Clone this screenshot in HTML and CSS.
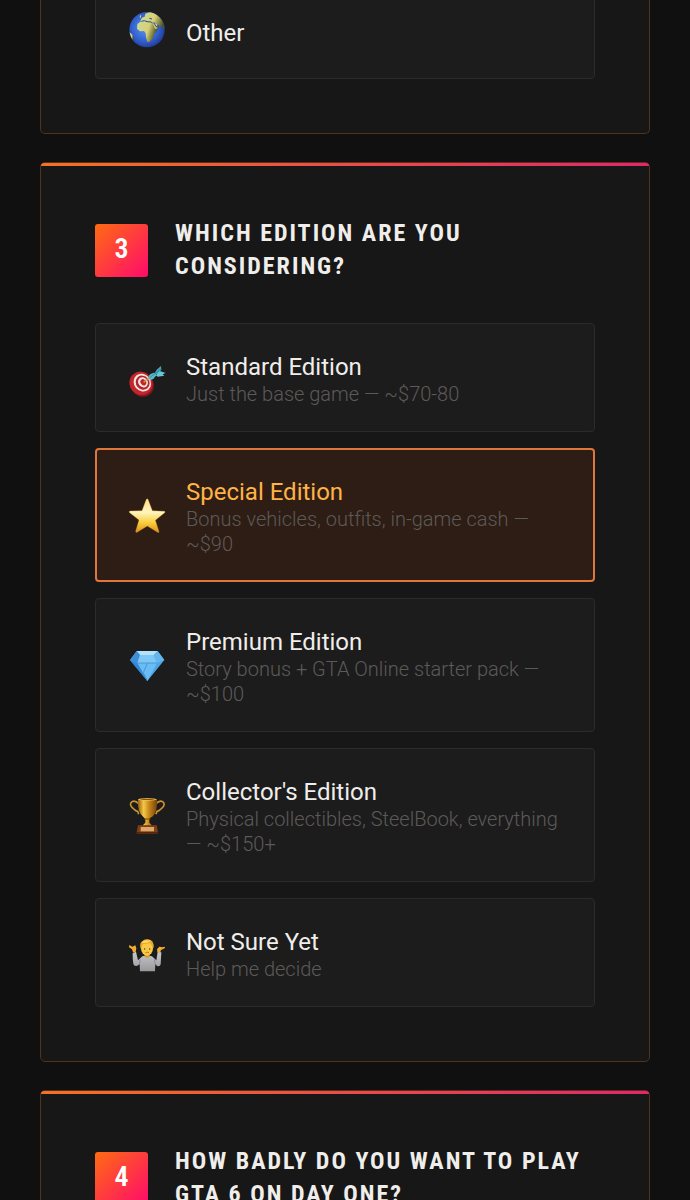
FILE: index.html
```
<!DOCTYPE html>
<html lang="en">
<head>
  <meta charset="UTF-8">
  <meta name="viewport" content="width=device-width, initial-scale=1.0">
  <title>GTA 6 Quiz</title>
  <link rel="stylesheet" href="styles.css">
</head>
<body>
  <main class="quiz">
    <section class="card card-continued">
      <div class="options">
        <label class="option option-plain">
          <input type="radio" name="platform" value="other">
          <svg class="icon" viewBox="27 33 108 108" aria-hidden="true">
            <defs>
              <radialGradient id="sea" cx="45%" cy="45%" r="55%">
                <stop offset="0" stop-color="#5f97ea"/>
                <stop offset=".7" stop-color="#315fd0"/>
                <stop offset="1" stop-color="#24409c"/>
              </radialGradient>
              <linearGradient id="land" x1="0" y1="0" x2="1" y2=".3">
                <stop offset="0" stop-color="#c9dc96"/>
                <stop offset=".6" stop-color="#d8cf77"/>
                <stop offset="1" stop-color="#4d5426"/>
              </linearGradient>
              <clipPath id="globe"><circle cx="81" cy="83" r="53"/></clipPath>
            </defs>
            <circle cx="81" cy="83" r="53" fill="url(#sea)"/>
            <g clip-path="url(#globe)" fill="url(#land)">
              <path d="M62 55l4-8 8-3 2-9 12-4 18-2 16 10 12 16 5 22-8 4-6-8-7 1-5-7-8-4-4 5 4 5-6 2-5-7-6 0-5-4-6 1-6 3-8 1z"/>
              <path d="M52 66l9-7 13 0 7 4 17 0 6 15 9 3-4 9-7 7-1 8-6 9-7 6-6-1-4-13-1-12-5-7-12 1-9-8z"/>
              <path d="M100 64l10 1 7 9-7 8-6-3z"/>
              <path d="M28 90l9 8 4 7-6 12z"/>
              <path d="M59 42l4-4 2 6-4 5z"/>
            </g>
            <path d="M64 58l9-2 8 3 13 1 4 4M88 49l8 2M101 61l7 13 8-3" fill="none" stroke="#294a94" stroke-width="3"/>
          </svg>
          <span class="option-text">
            <span class="option-title">Other</span>
          </span>
        </label>
      </div>
    </section>

    <section class="card">
      <div class="card-header">
        <span class="number">3</span>
        <h2 id="edition">Which edition are you considering?</h2>
      </div>
      <div class="options" role="radiogroup" aria-labelledby="edition">
        <label class="option">
          <input type="radio" name="edition" value="standard">
          <svg class="icon" viewBox="27 29 108 108" aria-hidden="true">
            <ellipse cx="67" cy="104" rx="34" ry="36" transform="rotate(-40 67 104)" fill="#84151d"/>
            <ellipse cx="63" cy="99" rx="34" ry="36" transform="rotate(-40 63 99)" fill="#c5242c"/>
            <ellipse cx="67" cy="97" rx="25" ry="28" transform="rotate(-40 67 97)" fill="#f2e8e2"/>
            <ellipse cx="68" cy="97" rx="20" ry="22" transform="rotate(-40 68 97)" fill="#b8232b"/>
            <ellipse cx="69" cy="96" rx="14" ry="16" transform="rotate(-40 69 96)" fill="#f2e8e2"/>
            <ellipse cx="70" cy="96" rx="8" ry="10" transform="rotate(-40 70 96)" fill="#c5242c"/>
            <path d="M71 96l17-15" stroke="#c9a044" stroke-width="4"/>
            <path d="M85 80l5-8 11-5 7 1 1 7-9 11-11 4z" fill="#55b9cc"/>
            <path d="M103 70l7-12 13-11 1 11-12 14z" fill="#48a4b7"/>
            <path d="M108 75l11-13 18 6-9 4 5 4-20 3z" fill="#65c8d7"/>
            <path d="M90 81l33-25" stroke="#297d91" stroke-width="2"/>
          </svg>
          <span class="option-text">
            <span class="option-title">Standard Edition</span>
            <span class="option-desc">Just the base game — ~$70-80</span>
          </span>
        </label>

        <label class="option">
          <input type="radio" name="edition" value="special" checked>
          <svg class="icon" viewBox="27 27 108 108" aria-hidden="true">
            <defs>
              <linearGradient id="star" x1="0" y1="0" x2="0" y2="1">
                <stop offset="0" stop-color="#ffe08a"/>
                <stop offset=".4" stop-color="#fff5bd"/>
                <stop offset=".7" stop-color="#f9cf3d"/>
                <stop offset="1" stop-color="#dc8e18"/>
              </linearGradient>
            </defs>
            <path d="M79 34q3-3 5 0l13 34 36 2q4 1 1 4l-28 23 11 34q0 4-4 2l-31-19-31 19q-4 1-4-3l10-34-28-22q-3-4 1-5l36-1z" fill="url(#star)" stroke="#d99a2b" stroke-width="1"/>
          </svg>
          <span class="option-text">
            <span class="option-title">Special Edition</span>
            <span class="option-desc">Bonus vehicles, outfits, in-game cash — ~$90</span>
          </span>
        </label>

        <label class="option">
          <input type="radio" name="edition" value="premium">
          <svg class="icon" viewBox="27 33 108 108" aria-hidden="true">
            <path d="M50 45h63l20 27-51 63-52-63z" fill="#4ca7e8"/>
            <path d="M50 45h63l-12 12H60z" fill="#b3e3fb"/>
            <path d="M50 45l10 12-8 24-22-9z" fill="#3e8fd8"/>
            <path d="M113 45l-12 12 10 24 22-9z" fill="#63b5ed"/>
            <path d="M60 57h41l10 24H52z" fill="#7bc8f6"/>
            <path d="M52 81h59l-29 54z" fill="#69bdf3"/>
            <path d="M30 72l22 9 30 54z" fill="#3387d6"/>
            <path d="M52 81h59M82 82l-12 28 12 25" fill="none" stroke="#3982c4" stroke-width="2"/>
          </svg>
          <span class="option-text">
            <span class="option-title">Premium Edition</span>
            <span class="option-desc">Story bonus + GTA Online starter pack — ~$100</span>
          </span>
        </label>

        <label class="option">
          <input type="radio" name="edition" value="collector">
          <svg class="icon" viewBox="27 33 108 108" aria-hidden="true">
            <defs>
              <linearGradient id="gold">
                <stop offset="0" stop-color="#9a5c0c"/>
                <stop offset=".3" stop-color="#f3c848"/>
                <stop offset=".6" stop-color="#c58418"/>
                <stop offset="1" stop-color="#794307"/>
              </linearGradient>
            </defs>
            <path d="M57 54q-11-12-21-7-9 7 0 17 12 12 17 12l3 9M107 54q11-12 21-7 9 7 0 17-12 12-17 12l-3 9" fill="none" stroke="#c79231" stroke-width="5"/>
            <path d="M54 39h57q2 46-18 55l-5 5 0 11 9 9H67l9-9V99l-5-5Q51 80 54 39z" fill="url(#gold)"/>
            <ellipse cx="82" cy="40" rx="28" ry="4" fill="#edc355"/>
            <ellipse cx="82" cy="40" rx="22" ry="2" fill="#83510f"/>
            <path d="M73 99h18" stroke="#7c4608" stroke-width="3"/>
            <path d="M54 118h56l4 20q1 5-5 5H54q-5 0-4-5z" fill="#7c3f17"/>
            <path d="M62 123h40v13H62z" fill="#dda66a"/>
            <path d="M50 138h64v5H50z" fill="#54270c"/>
          </svg>
          <span class="option-text">
            <span class="option-title">Collector's Edition</span>
            <span class="option-desc">Physical collectibles, SteelBook, everything — ~$150+</span>
          </span>
        </label>

        <label class="option">
          <input type="radio" name="edition" value="unsure">
          <svg class="icon" viewBox="27 26 108 108" aria-hidden="true">
            <defs>
              <linearGradient id="shirt" x1="0" y1="0" x2="0" y2="1">
                <stop offset="0" stop-color="#c9c9cc"/>
                <stop offset="1" stop-color="#98989c"/>
              </linearGradient>
            </defs>
            <path d="M38 80l10-4 6 26 13-12 14-3 15 3 13 12 4-25 11 1-2 36q-2 8-11 5l-5-6-1 22H60l-1-22q-9 10-17 4-4-5-4-37z" fill="url(#shirt)"/>
            <path d="M59 112l1-13M105 112l-1-13" stroke="#77777b" stroke-width="2"/>
            <path d="M74 82h15v9q-7 6-15 0z" fill="#dc972a"/>
            <path d="M28 56l9 5 9-4 3 9-2 11-8 1-3-9-9-6zM135 61l-8 2-9-2-7 8 1 9 9 0 2-7 11-5z" fill="#f2ad31"/>
            <ellipse cx="81" cy="66" rx="18" ry="22" fill="#fac943"/>
            <path d="M62 67q-5-18 6-23 4-7 16-5 19 2 17 27l-4-7-7-9q-14 4-22 3z" fill="#e9a92f"/>
            <path d="M66 46q11-8 28-2-14 7-27 6z" fill="#ffda60"/>
            <circle cx="74" cy="68" r="2" fill="#513213"/>
            <circle cx="89" cy="68" r="2" fill="#513213"/>
            <path d="M76 79q5-3 11 0" fill="none" stroke="#9c551c" stroke-width="2"/>
          </svg>
          <span class="option-text">
            <span class="option-title">Not Sure Yet</span>
            <span class="option-desc">Help me decide</span>
          </span>
        </label>
      </div>
    </section>

    <section class="card">
      <div class="card-header">
        <span class="number">4</span>
        <h2>How badly do you want to play GTA 6 on day one?</h2>
      </div>
    </section>
  </main>
</body>
</html>
```
FILE: styles.css
```
* {
  box-sizing: border-box;
}
html {
  height: 100%;
  overflow: hidden;
}
body {
  margin: 0;
  background: #111010;
  color: #f0eeeb;
  font-family: Roboto, 'Liberation Sans', sans-serif;
}
.quiz {
  display: flex;
  flex-direction: column;
  gap: 28px;
  padding: 0 40px;
}
.card {
  position: relative;
  padding: 54px;
  background: #171717;
  border: 1px solid #54321a;
  border-radius: 5px;
}
.card::before {
  content: '';
  position: absolute;
  top: 0;
  left: 0;
  right: 0;
  height: 3px;
  background: linear-gradient(90deg, #f57224, #e6246e);
  border-radius: 4px 4px 0 0;
}
.card-continued {
  padding-top: 0;
  border-top: none;
  border-radius: 0 0 5px 5px;
}
.card-continued::before {
  display: none;
}
.card-continued .options {
  margin-top: -17px;
}
.card-header {
  display: flex;
  align-items: center;
  gap: 27px;
  margin-bottom: 40px;
}
.number {
  flex: none;
  width: 53px;
  height: 53px;
  border-radius: 3px;
  background: linear-gradient(135deg, #ff6b12, #ff0a6c);
  color: #fff;
  font-family: 'Roboto Condensed', 'Liberation Sans Narrow', sans-serif;
  font-size: 28px;
  font-weight: 600;
  line-height: 50px;
  text-align: center;
}
h2 {
  margin: 0;
  font-family: 'Roboto Condensed', 'Liberation Sans Narrow', sans-serif;
  font-size: 24px;
  font-weight: 700;
  line-height: 33px;
  letter-spacing: 2px;
  text-transform: uppercase;
}
.options {
  display: flex;
  flex-direction: column;
  gap: 16px;
}
.option {
  position: relative;
  display: flex;
  align-items: center;
  gap: 21px;
  padding: 24px 33px;
  background: #1c1c1c;
  border: 1px solid #2b2b2b;
  border-radius: 4px;
  cursor: pointer;
}
.option-plain {
  min-height: 96px;
}
.option input {
  position: absolute;
  opacity: 0;
}
.option:has(input:checked) {
  background: #2e1d14;
  border: 2px solid #e0763a;
  padding: 23px 32px;
}
.option:has(input:checked) .option-title {
  color: #ffb347;
}
.icon {
  flex: none;
  width: 36px;
  height: 36px;
  overflow: visible;
}
.option-text {
  padding-top: 4px;
}
.option-title {
  display: block;
  font-size: 24px;
  font-weight: 400;
  line-height: 30px;
}
.option-desc {
  display: block;
  color: #5c5a59;
  font-size: 20px;
  font-weight: 300;
  line-height: 25px;
}
```
